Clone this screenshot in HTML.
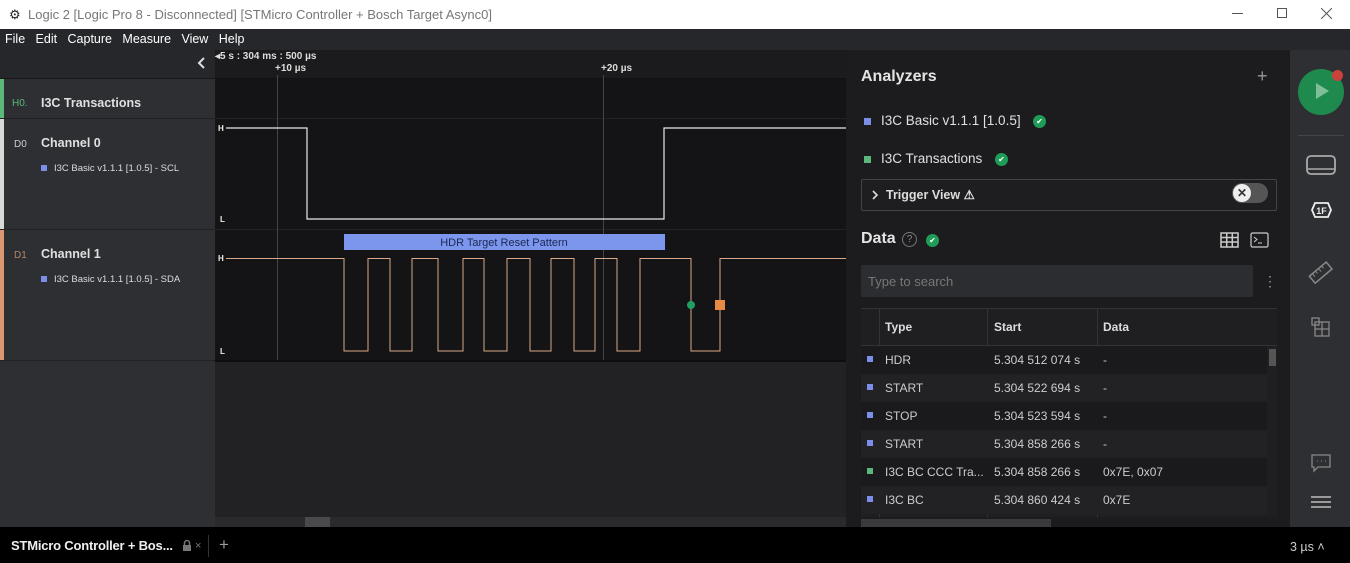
<!DOCTYPE html>
<html><head><meta charset="utf-8"><style>
*{margin:0;padding:0;box-sizing:border-box}
body{width:1350px;height:563px;overflow:hidden;background:#1c1c1e;font-family:"Liberation Sans",sans-serif;position:relative;color:#ddd}
.a{position:absolute}
.b{font-weight:bold}
</style></head><body>
<!-- title bar -->
<div class="a" style="left:0;top:0;width:1350px;height:29px;background:#fff"></div>
<div class="a" style="left:9px;top:7px;font-size:13px;color:#222">⚙</div>
<div class="a" style="left:28px;top:7px;font-size:13px;color:#777">Logic 2 [Logic Pro 8 - Disconnected] [STMicro Controller + Bosch Target Async0]</div>
<div class="a" style="left:1232px;top:13px;width:11px;height:1px;background:#555"></div>
<div class="a" style="left:1277px;top:8px;width:10px;height:10px;border:1px solid #555"></div>
<svg class="a" style="left:1321px;top:8px" width="11" height="11"><path d="M0 0L11 11M11 0L0 11" stroke="#555" stroke-width="1"/></svg>
<!-- menu -->
<div class="a" style="left:0;top:29px;width:1350px;height:21px;background:#26272b"></div>
<div class="a" style="left:5px;top:32px;font-size:12.5px;color:#fff">File&nbsp;&nbsp; Edit&nbsp;&nbsp; Capture&nbsp;&nbsp; Measure&nbsp;&nbsp; View&nbsp;&nbsp; Help</div>
<!-- left panel -->
<div class="a" style="left:0;top:50px;width:215px;height:477px;background:#2e2f33"></div>
<div class="a" style="left:0;top:50px;width:215px;height:29px;background:#26272b;border-bottom:1px solid #18181a"></div>
<svg class="a" style="left:197px;top:57px" width="10" height="12"><path d="M7 1L2 6l5 5" stroke="#ddd" stroke-width="2" fill="none"/></svg>
<div class="a" style="left:0;top:79px;width:4px;height:39px;background:#5cb87a"></div>
<div class="a" style="left:0;top:118px;width:215px;height:1px;background:#222"></div>
<div class="a" style="left:12px;top:98px;font-size:10px;color:#5cb87a">H0.</div>
<div class="a b" style="left:41px;top:96px;font-size:12.5px;color:#e0e0e0">I3C Transactions</div>
<div class="a" style="left:0;top:119px;width:4px;height:110px;background:#d8d8d8"></div>
<div class="a" style="left:0;top:229px;width:215px;height:1px;background:#222"></div>
<div class="a" style="left:14px;top:139px;font-size:10px;color:#ccc">D0</div>
<div class="a b" style="left:41px;top:136px;font-size:12.5px;color:#e0e0e0">Channel 0</div>
<div class="a" style="left:41px;top:165px;width:6px;height:6px;background:#7c8fe8"></div>
<div class="a" style="left:54px;top:163px;font-size:9.5px;color:#ddd">I3C Basic v1.1.1 [1.0.5] - SCL</div>
<div class="a" style="left:0;top:230px;width:4px;height:130px;background:#d99870"></div>
<div class="a" style="left:0;top:360px;width:215px;height:1px;background:#222"></div>
<div class="a" style="left:14px;top:250px;font-size:10px;color:#b08868">D1</div>
<div class="a b" style="left:41px;top:247px;font-size:12.5px;color:#e0e0e0">Channel 1</div>
<div class="a" style="left:41px;top:276px;width:6px;height:6px;background:#7c8fe8"></div>
<div class="a" style="left:54px;top:274px;font-size:9.5px;color:#ddd">I3C Basic v1.1.1 [1.0.5] - SDA</div>
<!-- waveform area -->
<div class="a" style="left:215px;top:50px;width:631px;height:477px;background:#222224"></div>
<div class="a" style="left:215px;top:50px;width:631px;height:29px;background:#1b1b1d;border-bottom:1px solid #111"></div>
<div class="a" style="left:215px;top:79px;width:631px;height:281px;background:#141416"></div>
<div class="a" style="left:215px;top:118px;width:631px;height:1px;background:#222"></div>
<div class="a" style="left:215px;top:229px;width:631px;height:1px;background:#222"></div>
<div class="a" style="left:215px;top:360px;width:631px;height:2px;background:#0e0e0e"></div>
<div class="a b" style="left:215px;top:51px;font-size:10px;color:#ddd">◂5 s : 304 ms : 500 µs</div>
<div class="a b" style="left:274px;top:63px;font-size:10px;color:#ddd;background:#1b1b1d;padding:0 1px">+10 µs</div>
<div class="a b" style="left:600px;top:63px;font-size:10px;color:#ddd;background:#1b1b1d;padding:0 1px">+20 µs</div>
<svg class="a" style="left:0;top:0" width="846" height="527">
<line x1="277.5" y1="75" x2="277.5" y2="360" stroke="#444" />
<line x1="603.5" y1="75" x2="603.5" y2="360" stroke="#444"/>
<polyline fill="none" stroke="#e8e8e8" stroke-width="1.2" points="226,128 307,128 307,219 664,219 664,128 846,128"/>
<rect x="344" y="234" width="321" height="16" fill="#7c96ee"/>
<text x="504" y="246" font-size="11" fill="#1c2850" text-anchor="middle" font-family="Liberation Sans">HDR Target Reset Pattern</text>
<polyline fill="none" stroke="#d8a888" stroke-width="1" points="226,258.5 344,258.5 344,351 368,351 368,258.5 390,258.5 390,351 412,351 412,258.5 438,258.5 438,351 463,351 463,258.5 484,258.5 484,351 507,351 507,258.5 530,258.5 530,351 551,351 551,258.5 574,258.5 574,351 595,351 595,258.5 617,258.5 617,351 640,351 640,258.5 691,258.5 691,351 720,351 720,258.5 846,258.5"/>
<circle cx="691" cy="305" r="4" fill="#1fa060"/>
<rect x="715" y="300" width="10" height="10" fill="#e88a44"/>
<text x="218" y="131" font-size="8" fill="#eee" font-weight="bold" font-family="Liberation Sans">H</text>
<text x="220" y="222" font-size="8" fill="#eee" font-weight="bold" font-family="Liberation Sans">L</text>
<text x="218" y="261" font-size="8" fill="#eee" font-weight="bold" font-family="Liberation Sans">H</text>
<text x="220" y="354" font-size="8" fill="#eee" font-weight="bold" font-family="Liberation Sans">L</text>
</svg>
<div class="a" style="left:215px;top:517px;width:631px;height:10px;background:#2a2a2c"></div>
<div class="a" style="left:305px;top:517px;width:25px;height:10px;background:#4a4a4c"></div>
<!-- right panel -->
<div class="a b" style="left:861px;top:68px;font-size:16px;color:#e4e4e4">Analyzers</div>
<div class="a" style="left:1257px;top:66px;font-size:18px;color:#999">+</div>
<div class="a" style="left:864px;top:118px;width:7px;height:7px;background:#7c8fe8"></div>
<div class="a" style="left:881px;top:113px;font-size:13.5px;color:#e0e0e0">I3C Basic v1.1.1 [1.0.5]</div>
<div class="a" style="left:1033px;top:115px;width:13px;height:13px;border-radius:50%;background:#1f9d58;color:#fff;font-size:8px;text-align:center;line-height:13px">✔</div>
<div class="a" style="left:864px;top:156px;width:7px;height:7px;background:#5cb87a"></div>
<div class="a" style="left:881px;top:151px;font-size:13.5px;color:#e0e0e0">I3C Transactions</div>
<div class="a" style="left:995px;top:153px;width:13px;height:13px;border-radius:50%;background:#1f9d58;color:#fff;font-size:8px;text-align:center;line-height:13px">✔</div>
<div class="a" style="left:861px;top:179px;width:416px;height:32px;border:1px solid #444;border-radius:2px;background:#1e1e20"></div>
<svg class="a" style="left:871px;top:190px" width="8" height="10"><path d="M2 1l4 4-4 4" stroke="#ddd" stroke-width="1.6" fill="none"/></svg>
<div class="a b" style="left:886px;top:187px;font-size:12.5px;color:#ddd">Trigger View ⚠</div>
<div class="a" style="left:1232px;top:183px;width:36px;height:20px;border-radius:10px;background:#555"></div>
<div class="a" style="left:1233px;top:184px;width:18px;height:18px;border-radius:50%;background:#eee;color:#333;font-size:12px;text-align:center;line-height:18px;font-weight:bold">✕</div>
<div class="a b" style="left:861px;top:230px;font-size:16px;color:#e4e4e4">Data</div>
<div class="a" style="left:902px;top:232px;width:15px;height:15px;border-radius:50%;border:1px solid #777;color:#888;font-size:10px;text-align:center;line-height:13px">?</div>
<div class="a" style="left:926px;top:234px;width:13px;height:13px;border-radius:50%;background:#1f9d58;color:#fff;font-size:8px;text-align:center;line-height:13px">✔</div>
<svg class="a" style="left:1220px;top:232px" width="60" height="18"><rect x="1" y="1" width="17" height="14" fill="none" stroke="#ccc" stroke-width="1.5"/><path d="M1 5.5H18M1 10H18M6.7 1V15M12.3 1V15" stroke="#ccc" stroke-width="1.5"/><rect x="31" y="1" width="17" height="14" rx="1.5" fill="none" stroke="#ccc" stroke-width="1.2"/><path d="M34 5l3 2.5-3 2.5M38 11h4" stroke="#ccc" fill="none"/></svg>
<div class="a" style="left:861px;top:265px;width:392px;height:32px;background:#2c2d30;border-radius:2px"></div>
<div class="a" style="left:868px;top:274px;font-size:13px;color:#777">Type to search</div>
<div class="a" style="left:1263px;top:273px;font-size:14px;color:#999">⋮</div>
<!-- table -->
<div class="a" style="left:861px;top:308px;width:416px;height:209px;background:#1f1f21;border-top:1px solid #333"></div>
<div class="a" style="left:861px;top:345px;width:416px;height:1px;background:#333"></div>
<div class="a" style="left:879px;top:309px;width:1px;height:208px;background:#333"></div>
<div class="a" style="left:987px;top:309px;width:1px;height:208px;background:#333"></div>
<div class="a" style="left:1097px;top:309px;width:1px;height:208px;background:#333"></div>
<div class="a b" style="left:885px;top:320px;font-size:12px;color:#ddd">Type</div>
<div class="a b" style="left:994px;top:320px;font-size:12px;color:#ddd">Start</div>
<div class="a b" style="left:1103px;top:320px;font-size:12px;color:#ddd">Data</div>
<div style="position:absolute;left:861px;top:346px;width:406px;font-size:12px;color:#ccc">
<div style="height:28px;position:relative;background:#1a1a1c"><span class="a" style="left:6px;top:10px;width:6px;height:6px;background:#7c8fe8"></span><span class="a" style="left:24px;top:7px">HDR</span><span class="a" style="left:133px;top:7px">5.304 512 074 s</span><span class="a" style="left:242px;top:7px">-</span></div>
<div style="height:28px;position:relative;background:#222225"><span class="a" style="left:6px;top:10px;width:6px;height:6px;background:#7c8fe8"></span><span class="a" style="left:24px;top:7px">START</span><span class="a" style="left:133px;top:7px">5.304 522 694 s</span><span class="a" style="left:242px;top:7px">-</span></div>
<div style="height:28px;position:relative;background:#1a1a1c"><span class="a" style="left:6px;top:10px;width:6px;height:6px;background:#7c8fe8"></span><span class="a" style="left:24px;top:7px">STOP</span><span class="a" style="left:133px;top:7px">5.304 523 594 s</span><span class="a" style="left:242px;top:7px">-</span></div>
<div style="height:28px;position:relative;background:#222225"><span class="a" style="left:6px;top:10px;width:6px;height:6px;background:#7c8fe8"></span><span class="a" style="left:24px;top:7px">START</span><span class="a" style="left:133px;top:7px">5.304 858 266 s</span><span class="a" style="left:242px;top:7px">-</span></div>
<div style="height:28px;position:relative;background:#1a1a1c"><span class="a" style="left:6px;top:10px;width:6px;height:6px;background:#5cb87a"></span><span class="a" style="left:24px;top:7px">I3C BC CCC Tra...</span><span class="a" style="left:133px;top:7px">5.304 858 266 s</span><span class="a" style="left:242px;top:7px">0x7E, 0x07</span></div>
<div style="height:28px;position:relative;background:#222225"><span class="a" style="left:6px;top:10px;width:6px;height:6px;background:#7c8fe8"></span><span class="a" style="left:24px;top:7px">I3C BC</span><span class="a" style="left:133px;top:7px">5.304 860 424 s</span><span class="a" style="left:242px;top:7px">0x7E</span></div>
</div>
<div class="a" style="left:1269px;top:349px;width:7px;height:17px;background:#555"></div>
<div class="a" style="left:861px;top:519px;width:190px;height:8px;background:#3a3a3c"></div>
<!-- sidebar -->
<div class="a" style="left:1290px;top:50px;width:60px;height:477px;background:#2e2f33"></div>
<div class="a" style="left:1298px;top:69px;width:46px;height:46px;border-radius:50%;background:#1f8a4e"></div>
<div class="a" style="left:1316px;top:83px;width:0;height:0;border-left:13px solid #7fbf98;border-top:8px solid transparent;border-bottom:8px solid transparent"></div>
<div class="a" style="left:1332px;top:70px;width:11px;height:11px;border-radius:50%;background:#c9423c"></div>
<div class="a" style="left:1298px;top:135px;width:46px;height:1px;background:#444"></div>
<svg class="a" style="left:1300px;top:150px" width="44" height="210">
<rect x="7" y="6" width="28" height="18" rx="4" fill="none" stroke="#aaa" stroke-width="1.8"/><path d="M8 19H34" stroke="#aaa" stroke-width="1.5"/>
<path d="M12 60l3-7h13l3 7-3 7H15z" fill="none" stroke="#eee" stroke-width="1.8"/><text x="21.5" y="64" font-size="9" fill="#eee" font-weight="bold" text-anchor="middle" font-family="Liberation Sans">1F</text>
<g transform="rotate(-40 21 123)"><rect x="10" y="118" width="22" height="9" fill="none" stroke="#888" stroke-width="1.5"/><path d="M14 118v4M18 118v3M22 118v4M26 118v3" stroke="#888"/></g>
<rect x="12" y="168" width="7" height="7" fill="none" stroke="#888" stroke-width="1.3"/><rect x="15" y="172" width="14" height="14" fill="none" stroke="#888" stroke-width="1.3"/><path d="M22 172v14M15 179h14" stroke="#888" stroke-width="1.3"/>
</svg>
<svg class="a" style="left:1310px;top:453px" width="24" height="60"><path d="M2 2h18v12H8l-4 4v-4H2z" fill="none" stroke="#888" stroke-width="1.3"/><path d="M7 8h1M11 8h1M15 8h1" stroke="#888"/><path d="M1 44h20M1 49h20M1 54h20" stroke="#999" stroke-width="2"/></svg>
<!-- bottom bar -->
<div class="a" style="left:0;top:527px;width:1350px;height:36px;background:#000"></div>
<div class="a b" style="left:11px;top:538px;font-size:13px;color:#eee;letter-spacing:-0.2px">STMicro Controller + Bos...</div>
<svg class="a" style="left:182px;top:539px" width="10" height="13"><path d="M2.5 6V4a2.5 2.5 0 0 1 5 0v2" stroke="#777" stroke-width="1.5" fill="none"/><rect x="1" y="6" width="8" height="6" fill="#777"/></svg>
<div class="a" style="left:195px;top:540px;font-size:11px;color:#777">×</div>
<div class="a" style="left:208px;top:535px;width:1px;height:22px;background:#333"></div>
<div class="a" style="left:219px;top:535px;font-size:17px;color:#999">+</div>
<div class="a" style="left:1290px;top:540px;font-size:12.5px;color:#ccc">3 µs ˄</div>
</body></html>
